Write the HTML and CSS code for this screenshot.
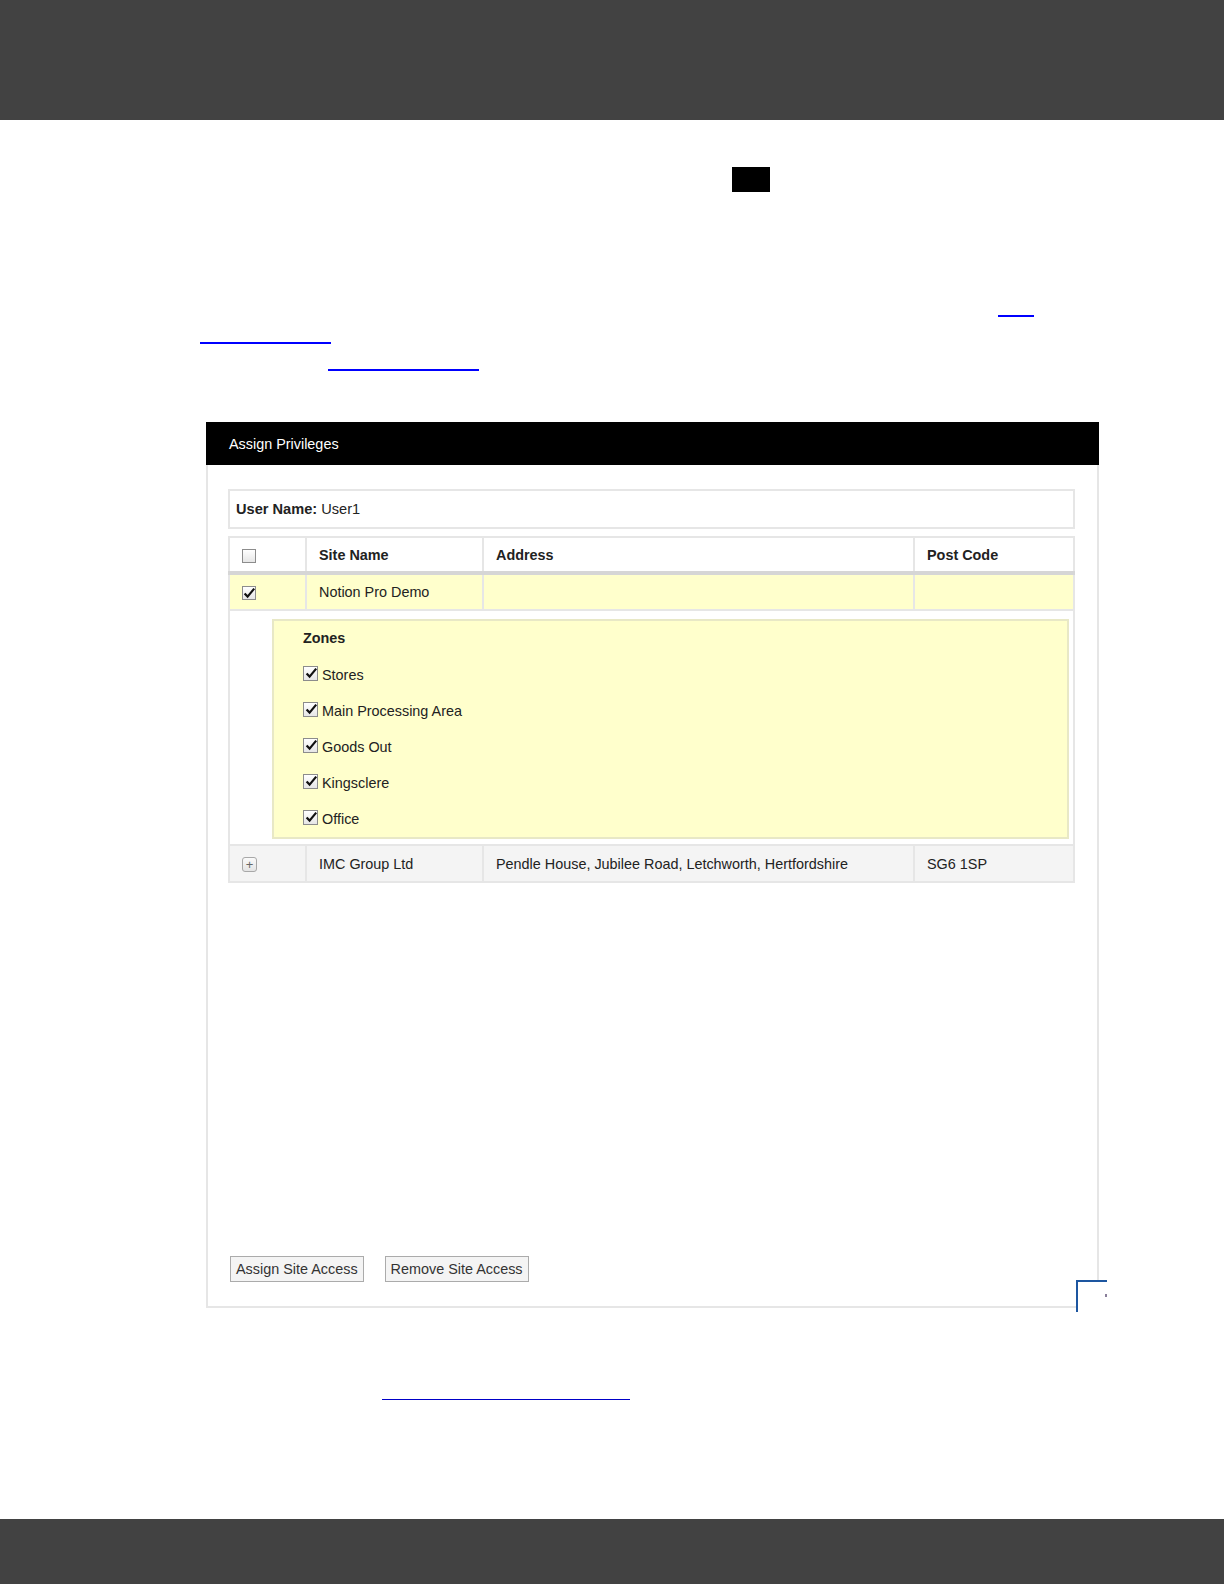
FILE: index.html
```html
<!DOCTYPE html>
<html>

<head>
    <meta charset="utf-8">
    <title>Assign Privileges</title>
    <link rel="stylesheet" href="styles.css">
</head>

<body>
    <div class="page">
        <header class="topbar"></header>

        <main class="doc">
            <div class="stamp"></div>

            <div class="refs">
                <div class="ref-line"><a class="ref ref1" href="#"></a></div>
                <div class="ref-line"><a class="ref ref2" href="#"></a></div>
                <div class="ref-line"><a class="ref ref3" href="#"></a></div>
            </div>

            <section class="panel">
                <div class="panel-head">Assign Privileges</div>
                <div class="panel-body">
                    <div class="user-box"><b>User Name:</b>&nbsp;User1</div>

                    <table class="sites">
                        <thead>
                            <tr>
                                <th class="col-check"><span class="cb"></span></th>
                                <th class="col-name">Site Name</th>
                                <th class="col-addr">Address</th>
                                <th class="col-post">Post Code</th>
                            </tr>
                        </thead>
                        <tbody>
                            <tr class="picked">
                                <td><span class="cb">
                                    <svg viewBox="0 0 12 12" width="12" height="12"><path d="M1.6 6.4 L4.6 9.6 L11.2 1.6" /></svg>
                                </span></td>
                                <td>Notion Pro Demo</td>
                                <td></td>
                                <td></td>
                            </tr>
                            <tr class="zone-row">
                                <td colspan="4">
                                    <div class="zones">
                                        <div class="zones-title">Zones</div>
                                        <label class="zone"><span class="cb">
                                            <svg viewBox="0 0 12 12" width="12" height="12"><path d="M1.6 6.4 L4.6 9.6 L11.2 1.6" /></svg>
                                        </span>Stores</label>
                                        <label class="zone"><span class="cb">
                                            <svg viewBox="0 0 12 12" width="12" height="12"><path d="M1.6 6.4 L4.6 9.6 L11.2 1.6" /></svg>
                                        </span>Main Processing Area</label>
                                        <label class="zone"><span class="cb">
                                            <svg viewBox="0 0 12 12" width="12" height="12"><path d="M1.6 6.4 L4.6 9.6 L11.2 1.6" /></svg>
                                        </span>Goods Out</label>
                                        <label class="zone"><span class="cb">
                                            <svg viewBox="0 0 12 12" width="12" height="12"><path d="M1.6 6.4 L4.6 9.6 L11.2 1.6" /></svg>
                                        </span>Kingsclere</label>
                                        <label class="zone"><span class="cb">
                                            <svg viewBox="0 0 12 12" width="12" height="12"><path d="M1.6 6.4 L4.6 9.6 L11.2 1.6" /></svg>
                                        </span>Office</label>
                                    </div>
                                </td>
                            </tr>
                            <tr class="other">
                                <td><span class="expand">+</span></td>
                                <td>IMC Group Ltd</td>
                                <td>Pendle House, Jubilee Road, Letchworth, Hertfordshire</td>
                                <td>SG6 1SP</td>
                            </tr>
                        </tbody>
                    </table>

                    <div class="actions">
                        <button class="btn">Assign Site Access</button>
                        <button class="btn">Remove Site Access</button>
                    </div>
                </div>
                <div class="corner-tab"></div>
            </section>

            <a class="foot-ref" href="#"></a>
        </main>

        <footer class="bottombar"></footer>
    </div>
</body>

</html>
```

FILE: styles.css
```css
/* General styles */

html {
    background-color: white;
}

body {
    margin: 0;
    font-family: "Liberation Sans", Arial, sans-serif;
    color: #222;
}

* {
    box-sizing: border-box;
}

.page {
    height: 1584px;
    display: flex;
    flex-direction: column;
}

.topbar {
    flex: none;
    height: 120px;
    background-color: #424242;
}

.bottombar {
    flex: none;
    height: 65px;
    background-color: #424242;
}

.doc {
    flex: 1;
}

/* document bits */

.stamp {
    width: 38px;
    height: 25px;
    margin: 47px 0 0 732px;
    background-color: #000;
}

.refs {
    margin-top: 98px;
}

.ref-line {
    height: 27px;
    display: flex;
    align-items: flex-end;
}

.ref {
    display: block;
    height: 0;
    border-bottom: 2px solid #0000ff;
}

.ref1 { margin-left: 998px; width: 36px; }
.ref2 { margin-left: 200px; width: 131px; }
.ref3 { margin-left: 328px; width: 151px; }

.foot-ref {
    display: block;
    width: 248px;
    height: 0;
    margin: 91px 0 0 382px;
    border-bottom: 1px solid #0000c8;
}

/* Panel */

.panel {
    position: relative;
    width: 893px;
    height: 886px;
    margin: 51px 0 0 206px;
    display: flex;
    flex-direction: column;
}

.panel-head {
    flex: none;
    height: 43px;
    padding-left: 23px;
    display: flex;
    align-items: center;
    background-color: #000;
    color: #fff;
    font-size: 14.4px;
}

.panel-body {
    flex: 1;
    display: flex;
    flex-direction: column;
    padding: 24px 22px 24px 20px;
    border: 2px solid #e6e6e6;
    border-top: 0;
}

.user-box {
    height: 40px;
    padding-left: 6px;
    display: flex;
    align-items: center;
    border: 2px solid #e6e6e6;
    font-size: 14.6px;
}

/* Sites table */

.sites {
    width: 100%;
    margin-top: 7px;
    border-collapse: collapse;
    font-size: 14.4px;
}

.sites th,
.sites td {
    border: 2px solid #e6e6e6;
    padding: 0 12px;
    text-align: left;
}

.sites th {
    height: 36px;
    border-bottom: 4px solid #d6d6d6;
}

.col-check { width: 77px; }
.col-name { width: 177px; }
.col-addr { width: 431px; }

.picked td {
    height: 37px;
    background-color: #ffffcc;
}

.other td {
    height: 37px;
    background-color: #f4f4f4;
}

.sites .zone-row td {
    padding: 8px 4px 5px 42px;
}

.zones {
    padding-left: 29px;
    background-color: #ffffcc;
    border: 2px solid #e8e8c6;
}

.zones-title {
    height: 36px;
    line-height: 35px;
    font-weight: bold;
}

.zone {
    height: 36px;
    display: flex;
    align-items: center;
    gap: 4px;
}

.zone .cb {
    width: 15px;
    height: 15px;
    margin-top: -4px;
}

/* fake checkboxes */

.cb {
    width: 14px;
    height: 14px;
    display: inline-flex;
    align-items: center;
    justify-content: center;
    vertical-align: middle;
    border: 1px solid #8c8c8c;
    background: linear-gradient(#ffffff, #e6e6e6);
}

.cb svg {
    overflow: visible;
}

.cb svg path {
    fill: none;
    stroke: #111;
    stroke-width: 2.2;
}

.expand {
    width: 15px;
    height: 15px;
    display: inline-flex;
    align-items: center;
    justify-content: center;
    vertical-align: middle;
    border: 1px solid #a8a8a8;
    border-radius: 3px;
    background: linear-gradient(#fafafa, #e4e4e4);
    color: #666;
    font-size: 13px;
    line-height: 1;
}

/* Buttons */

.actions {
    margin-top: auto;
    display: flex;
    gap: 21px;
    padding-left: 2px;
}

.btn {
    height: 26px;
    padding: 0 5px;
    border: 1px solid #ababab;
    background-color: #f4f4f4;
    color: #333;
    font-family: "Liberation Sans", Arial, sans-serif;
    font-size: 14.4px;
}

/* little tab over the corner */

.corner-tab {
    position: absolute;
    left: 870px;
    top: 858px;
    width: 31px;
    height: 32px;
    background-color: #fff;
    border-top: 2px solid #1d56a0;
    border-left: 2px solid #1d56a0;
}

.corner-tab::after {
    content: "";
    position: absolute;
    right: 0;
    top: 12px;
    width: 2px;
    height: 3px;
    background-color: #8a7f9a;
}
```
